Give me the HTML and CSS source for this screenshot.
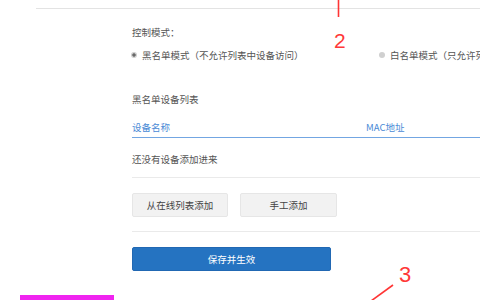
FILE: index.html
```html
<!DOCTYPE html>
<html lang="zh">
<head>
<meta charset="utf-8">
<link rel="stylesheet" href="styles.css">
</head>
<body>
<div class="page">
  <div class="topline"></div>
  <div class="content">
    <div class="label">控制模式：</div>
    <div class="radios">
      <div class="radio-item first"><span class="radio checked"></span><span>黑名单模式（不允许列表中设备访问）</span></div>
      <div class="radio-item"><span class="radio"></span><span>白名单模式（只允许列表中设备访问）</span></div>
    </div>
    <div class="section-title">黑名单设备列表</div>
    <div class="table-head">
      <span class="col-name">设备名称</span>
      <span class="col-mac">MAC地址</span>
    </div>
    <div class="empty">还没有设备添加进来</div>
    <div class="rule"></div>
    <div class="buttons">
      <button class="btn btn-online">从在线列表添加</button>
      <button class="btn btn-manual">手工添加</button>
    </div>
    <div class="rule rule2"></div>
    <button class="btn-save">保存并生效</button>
  </div>

  <svg class="marks" width="480" height="300" viewBox="0 0 480 300">
    <line x1="338.5" y1="0" x2="338.5" y2="17" stroke="#ff3535" stroke-width="1.6"/>
    <line x1="393" y1="285" x2="371" y2="301" stroke="#ff3535" stroke-width="1.6"/>
  </svg>
  <div class="num num2">2</div>
  <div class="num num3">3</div>
  <div class="magenta"></div>
</div>
</body>
</html>
```

FILE: styles.css
```css
html, body {
  margin: 0;
  padding: 0;
  background: #ffffff;
}
body {
  font-family: "Noto Sans CJK SC", "Noto Sans", sans-serif;
  font-size: 9.5px;
  color: #555555;
  overflow: hidden;
}
.page {
  position: relative;
  width: 480px;
  height: 300px;
  overflow: hidden;
}
.topline {
  margin: 8px 0 0 36px;
  height: 1px;
  background: #e3e3e3;
}
.content {
  padding-left: 132px;
}
.label {
  margin-top: 16px;
  line-height: 14px;
}
.radios {
  display: flex;
  margin-top: 9px;
  line-height: 14px;
  white-space: nowrap;
}
.radio-item {
  display: flex;
  align-items: center;
  margin-left: -1px;
}
.radio-item.first {
  width: 249px;
  flex: none;
}
.radio {
  display: inline-block;
  box-sizing: border-box;
  width: 6px;
  height: 6px;
  border-radius: 50%;
  background: #d0d0d0;
  margin-right: 5px;
}
.radio.checked {
  background: radial-gradient(circle, #6a6a6a 0 1.4px, #cfcfcf 1.9px);
}
.section-title {
  margin-top: 30px;
  line-height: 14px;
}
.table-head {
  display: flex;
  margin-top: 14px;
  line-height: 14px;
  padding-bottom: 3px;
  border-bottom: 1px solid #73a6e2;
  color: #4a8ad6;
}
.col-name {
  width: 234px;
  flex: none;
}
.empty {
  margin-top: 14px;
  line-height: 14px;
}
.rule {
  margin-top: 11px;
  height: 1px;
  background: #eaeaea;
}
.buttons {
  display: flex;
  gap: 12px;
  margin-top: 15px;
}
.btn {
  box-sizing: border-box;
  height: 24px;
  border: 1px solid #e6e6e6;
  border-radius: 2px;
  background: #f2f2f2;
  color: #444444;
  font-family: inherit;
  font-size: 9.5px;
  padding: 0;
}
.btn-online {
  width: 96px;
}
.btn-manual {
  width: 97px;
}
.rule2 {
  margin-top: 14px;
}
.btn-save {
  display: block;
  box-sizing: border-box;
  margin-top: 15px;
  width: 199px;
  height: 24px;
  border: 1px solid #2168b3;
  border-radius: 2px;
  background: #2573c1;
  color: #ffffff;
  font-family: inherit;
  font-size: 9.5px;
  padding: 0;
}
.marks {
  position: absolute;
  left: 0;
  top: 0;
  pointer-events: none;
}
.num {
  position: absolute;
  font-family: "Liberation Sans", Arial, sans-serif;
  color: #ff3838;
  line-height: 1;
}
.num2 {
  left: 334px;
  top: 30px;
  font-size: 21px;
}
.num3 {
  left: 399px;
  top: 264px;
  font-size: 22px;
}
.magenta {
  position: absolute;
  left: 20px;
  top: 295px;
  width: 94px;
  height: 5px;
  background: #f024f0;
}
```
